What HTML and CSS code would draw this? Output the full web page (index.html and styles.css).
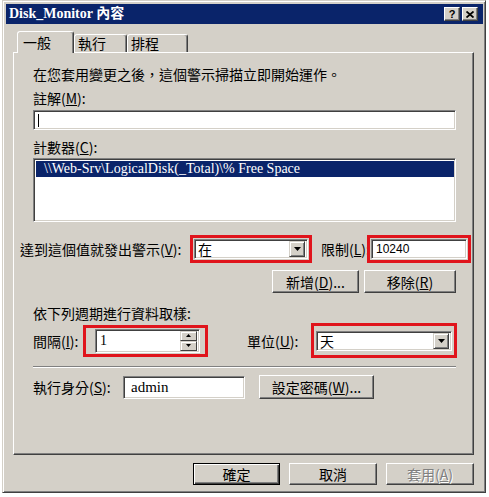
FILE: index.html
```html
<!DOCTYPE html>
<html lang="zh-Hant">
<head>
<meta charset="utf-8">
<title>Disk_Monitor 內容</title>
<link rel="stylesheet" href="styles.css">
</head>
<body>
<div class="dialog">
  <div class="titlebar">
    <span class="title">Disk_Monitor 內容</span>
    <div class="tbtns">
      <span class="tbtn help">?</span>
      <span class="tbtn"><svg width="8" height="7" viewBox="0 0 8 7"><path d="M0.5 0.5 L7.5 6.5 M7.5 0.5 L0.5 6.5" stroke="#000" stroke-width="1.8" fill="none"/></svg></span>
    </div>
  </div>
  <div class="client">
    <div class="tabs">
      <div class="tab active t1">一般</div>
      <div class="tab t2">執行</div>
      <div class="tab t3">排程</div>
    </div>
    <div class="panel">
      <p class="text intro">在您套用變更之後，這個警示掃描立即開始運作。</p>
      <p class="text lbl-comment">註解(<u>M</u>):</p>
      <div class="field comment"><span class="caret"></span></div>
      <p class="text lbl-counter">計數器(<u>C</u>):</p>
      <div class="field listbox">
        <div class="list-row selected">\\Web-Srv\LogicalDisk(_Total)\% Free Space</div>
      </div>
      <div class="threshold">
        <span class="lbl lbl-alert">達到這個值就發出警示(<u>V</u>):</span>
        <div class="hl hl-when">
          <div class="field combo"><span class="combo-text">在</span><span class="drop"><svg width="7" height="4" viewBox="0 0 7 4"><path d="M0 0 H7 L3.5 4 Z" fill="#000"/></svg></span></div>
        </div>
        <span class="lbl lbl-limit">限制(<u>L</u>):</span>
        <div class="hl hl-limit">
          <div class="field limit">10240</div>
        </div>
      </div>
      <div class="btnrow">
        <button class="btn btn-add">新增(<u>D</u>)...</button>
        <button class="btn btn-remove">移除(<u>R</u>)</button>
      </div>
      <p class="text lbl-sample">依下列週期進行資料取樣:</p>
      <div class="sample">
        <span class="lbl lbl-interval">間隔(<u>I</u>):</span>
        <div class="hl hl-interval">
          <div class="field spin"><span class="spin-text">1</span>
            <span class="spinbtns">
              <span class="spinbtn"><svg width="5" height="3" viewBox="0 0 5 3"><path d="M2.5 0 L5 3 H0 Z" fill="#000"/></svg></span>
              <span class="spinbtn"><svg width="5" height="3" viewBox="0 0 5 3"><path d="M0 0 H5 L2.5 3 Z" fill="#000"/></svg></span>
            </span>
          </div>
        </div>
        <span class="lbl lbl-unit">單位(<u>U</u>):</span>
        <div class="hl hl-unit">
          <div class="field combo"><span class="combo-text">天</span><span class="drop"><svg width="7" height="4" viewBox="0 0 7 4"><path d="M0 0 H7 L3.5 4 Z" fill="#000"/></svg></span></div>
        </div>
      </div>
      <div class="sep"></div>
      <div class="runas">
        <span class="lbl lbl-runas">執行身分(<u>S</u>):</span>
        <div class="field user">admin</div>
        <button class="btn btn-pass">設定密碼(<u>W</u>)...</button>
      </div>
    </div>
    <div class="footer">
      <button class="btn btn-ok default">確定</button>
      <button class="btn btn-cancel">取消</button>
      <button class="btn btn-apply" disabled>套用(<u>A</u>)</button>
    </div>
  </div>
</div>
</body>
</html>
```
FILE: styles.css
```css
* { box-sizing: border-box; }

body {
  margin: 0;
  background: #ffffff;
  font-family: "Noto Sans CJK TC", "Noto Sans", sans-serif;
  font-size: 14px;
  line-height: 18px;
  color: #000;
}

u { text-decoration: underline; text-underline-offset: 1px; }

.dialog {
  margin-left: 2px;
  width: 484px;
  height: 493px;
  background: #d4d0c8;
  border: 1px solid;
  border-color: #d4d0c8 #404040 #404040 #d4d0c8;
  box-shadow: inset 1px 1px #ffffff, inset -1px -1px #808080;
  padding: 3px 2px 2px 3px;
  display: flex;
  flex-direction: column;
}

.titlebar {
  height: 20px;
  flex-shrink: 0;
  background: #0a246a;
  color: #fff;
  display: flex;
  align-items: center;
  padding-left: 3px;
}

.title {
  font-family: "Liberation Serif", "Noto Sans CJK TC", serif;
  font-weight: bold;
  font-size: 14px;
  white-space: nowrap;
}

.tbtns {
  margin-left: auto;
  margin-right: 5px;
  display: flex;
  gap: 2px;
}

.tbtn {
  width: 16px;
  height: 14px;
  background: #d4d0c8;
  border: 1px solid;
  border-color: #ffffff #404040 #404040 #ffffff;
  box-shadow: inset -1px -1px #808080;
  display: flex;
  align-items: center;
  justify-content: center;
}

.help {
  font-family: "Liberation Sans", sans-serif;
  font-weight: bold;
  font-size: 11px;
  line-height: 11px;
  color: #000;
}

.client {
  flex: 1;
  padding: 7px 9px 0 7px;
  display: flex;
  flex-direction: column;
}

.tabs {
  display: flex;
  align-items: flex-end;
  height: 21px;
  margin-left: 4px;
  position: relative;
  z-index: 1;
}

.tab {
  height: 18px;
  background: #d4d0c8;
  border: 1px solid;
  border-bottom: none;
  border-color: #ffffff #404040 transparent #ffffff;
  box-shadow: inset -1px 0 #808080;
  border-radius: 3px 3px 0 0;
  padding-left: 3px;
  line-height: 17px;
  white-space: nowrap;
}

.tab.active {
  height: 22px;
  margin-bottom: -1px;
  padding-left: 5px;
  line-height: 21px;
}

.t1 { width: 57px; }
.t2 { width: 53px; }
.t3 { width: 61px; }

.panel {
  height: 403px;
  flex-shrink: 0;
  border: 1px solid;
  border-color: #ffffff #404040 #404040 #ffffff;
  box-shadow: inset -1px -1px #808080;
  padding: 12px 17px 0 19px;
  display: flex;
  flex-direction: column;
}

.text { margin: 0; white-space: nowrap; }
.lbl { white-space: nowrap; flex-shrink: 0; }

.lbl-comment { margin-top: 6px; }
.lbl-counter { margin-top: 8px; }
.lbl-sample { margin-top: 11px; }

.field {
  background: #ffffff;
  border: 1px solid;
  border-color: #808080 #ffffff #ffffff #808080;
  box-shadow: inset 1px 1px #404040, inset -1px -1px #d4d0c8;
}

.comment {
  margin-top: 3px;
  height: 20px;
  display: flex;
  align-items: center;
  padding-left: 4px;
}

.caret {
  width: 1px;
  height: 13px;
  background: #000;
}

.listbox {
  margin-top: 2px;
  height: 64px;
  padding: 2px 1px 0 2px;
}

.list-row {
  height: 16px;
  line-height: 16px;
  padding-left: 8px;
  font-family: "Liberation Serif", serif;
  font-size: 14px;
  white-space: nowrap;
}

.list-row.selected {
  background: #0a246a;
  color: #ffffff;
}

.threshold {
  margin-top: 13px;
  margin-left: -13px;
  height: 28px;
  display: flex;
  align-items: center;
}

.lbl-alert { width: 170px; }
.lbl-limit { width: 46px; margin-left: 9px; }

.hl {
  border: 3px solid #e0141c;
  flex-shrink: 0;
}

.hl-when { width: 122px; height: 28px; padding: 1px; }
.hl-limit { width: 104px; height: 28px; padding: 1px; }

.combo {
  height: 20px;
  display: flex;
  align-items: center;
  padding: 0 2px 0 3px;
}

.combo-text { flex: 1; }

.drop {
  width: 16px;
  height: 16px;
  background: #d4d0c8;
  border: 1px solid;
  border-color: #d4d0c8 #404040 #404040 #d4d0c8;
  box-shadow: inset 1px 1px #ffffff, inset -1px -1px #808080;
  display: flex;
  align-items: center;
  justify-content: center;
}

.limit {
  height: 20px;
  padding-left: 4px;
  font-family: "Liberation Sans", sans-serif;
  font-size: 12px;
  line-height: 18px;
}

.btnrow {
  margin-top: 7px;
  height: 23px;
  display: flex;
  justify-content: flex-end;
  gap: 5px;
}

.btn {
  font-family: inherit;
  font-size: 14px;
  line-height: 18px;
  color: #000;
  background: #d4d0c8;
  border: 1px solid;
  border-color: #ffffff #404040 #404040 #ffffff;
  box-shadow: inset -1px -1px #808080;
  padding: 0;
  white-space: nowrap;
}

.btn-add { width: 87px; }
.btn-remove { width: 92px; }

.sample {
  margin-top: 1px;
  height: 35px;
  display: flex;
  align-items: center;
}

.lbl-interval { width: 50px; }
.hl-interval { width: 125px; height: 32px; padding: 1px 5px 1px 9px; }
.lbl-unit { width: 64px; margin-left: 39px; }
.hl-unit { width: 146px; height: 35px; padding: 5px 2px 4px 2px; }

.spin {
  height: 24px;
  display: flex;
  align-items: center;
  padding: 2px 2px 2px 4px;
}

.spin-text {
  flex: 1;
  font-family: "Liberation Serif", serif;
  font-size: 14px;
}

.spinbtns {
  width: 17px;
  height: 20px;
  display: flex;
  flex-direction: column;
}

.spinbtn {
  flex: 1;
  background: #d4d0c8;
  border: 1px solid;
  border-color: #d4d0c8 #404040 #404040 #d4d0c8;
  box-shadow: inset 1px 1px #ffffff;
  display: flex;
  align-items: center;
  justify-content: center;
}

.sep {
  margin-top: 8px;
  height: 2px;
  border-top: 1px solid #808080;
  border-bottom: 1px solid #ffffff;
}

.runas {
  margin-top: 7px;
  height: 24px;
  display: flex;
  align-items: center;
}

.lbl-runas { width: 90px; }

.user {
  width: 122px;
  height: 23px;
  padding-left: 7px;
  font-family: "Liberation Serif", serif;
  font-size: 15px;
  line-height: 21px;
}

.btn-pass { width: 115px; height: 24px; margin-left: 14px; }

.footer {
  margin-top: 8px;
  display: flex;
  justify-content: flex-end;
  gap: 9px;
}

.footer .btn { height: 22px; width: 88px; }
.footer .btn-ok { width: 87px; }

.btn.default {
  border: 1px solid #000;
  box-shadow: inset 1px 1px #ffffff, inset -1px -1px #404040, inset -2px -2px #808080;
}

.btn-apply {
  color: #808080;
  text-shadow: 1px 1px #ffffff;
}
```
